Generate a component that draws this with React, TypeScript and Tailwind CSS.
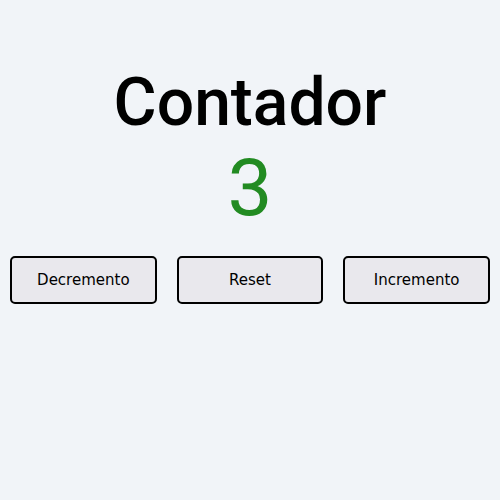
export default function App() {
  return (
    <div className="w-[500px] h-[500px] bg-[#f1f4f8] flex flex-col items-center pt-[63px] font-['Roboto',sans-serif]">
      <h1 className="text-[66px] leading-[80px] text-black font-medium">Contador</h1>
      <div className="text-[80px] leading-[90px] text-[#228b22]">3</div>
      <div className="w-full flex gap-5 px-[10px] mt-[23px] font-['DejaVu_Sans',sans-serif]">
        <button className="flex-1 h-[48px] bg-[#e9e8ed] border-2 border-black rounded-[5px] text-[15px] text-black">Decremento</button>
        <button className="flex-1 h-[48px] bg-[#e9e8ed] border-2 border-black rounded-[5px] text-[15px] text-black">Reset</button>
        <button className="flex-1 h-[48px] bg-[#e9e8ed] border-2 border-black rounded-[5px] text-[15px] text-black">Incremento</button>
      </div>
    </div>
  );
}
